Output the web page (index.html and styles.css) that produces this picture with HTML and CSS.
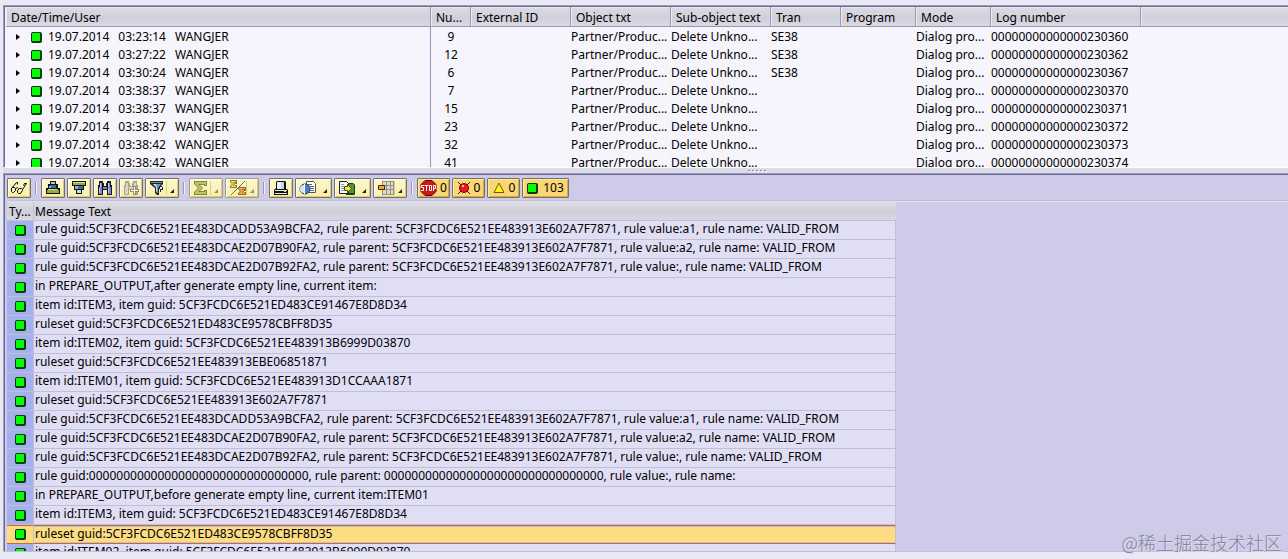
FILE: index.html
```html
<!DOCTYPE html>
<html lang="en">
<head>
  <meta charset="UTF-8">
  <title>Display logs</title>
  <link rel="stylesheet" href="styles.css">
</head>
<body>

  <svg class="defs" aria-hidden="true">
    <symbol id="glasses" viewBox="0 0 18 16">
      <g fill="none" stroke="#000"><path d="M2.500 7.500h2l1 1v2l-2 2h-1l-1-1v-3zM9.500 8.500h2l1 1v1l-2 3h-2l-1-1v-2zM5.500 8.500l2-1 1 1M1.500 8.500l5-6h1v2M12.500 9.500l4-6h-2l-1 2"/></g>
    </symbol>
    <symbol id="asc" viewBox="0 0 16 16">
      <path d="M5 1h6v3h2v4h2v6H1V8h2V4h2z" fill="#111"/>
      <path d="M6 2h4v2H6z" fill="#b4c9c4"/>
      <path d="M5 5h6v3H4V6h1z" fill="#2d6fa8"/>
      <path d="M4 6h2v2H4z" fill="#84b9dc"/>
      <path d="M3 9h10v1h1v3H2v-3h1z" fill="#8fac45"/>
      <path d="M3 9h9v1H3z" fill="#d3e08d"/>
    </symbol>
    <symbol id="desc" viewBox="0 0 16 16">
      <path d="M1 1h14v5h-2v4h-2v4H5v-4H3V6H1z" fill="#111"/>
      <path d="M2 2h12v3H2z" fill="#8fac45"/>
      <path d="M2 2h12v1H2z" fill="#d3e08d"/>
      <path d="M4 6h8v3H4z" fill="#2d6fa8"/>
      <path d="M4 6h3v3H4z" fill="#84b9dc"/>
      <path d="M6 10h4v3H6z" fill="#c9dcd8"/>
    </symbol>
    <symbol id="find" viewBox="0 0 16 16">
      <path d="M2 1h4v2h1v3h2V3h1V1h4v4h1v10h-5v-5H6v5H1V5h1z" fill="#16162c"/>
      <path d="M3 3h2v4H3zM2 7h3v7H2zM11 3h2v4h-2zM11 7h3v7h-3zM6 7h4v2H6z" fill="#7b84c4"/>
      <path d="M3 3h1v4H3zM2 8h1v5H2zM11 3h1v4h-1zM11 8h1v5h-1z" fill="#c3c9ee"/>
    </symbol>
    <symbol id="find-next" viewBox="0 0 16 16">
      <path d="M2 1h4v2h1v3h2V3h1V1h4v4h1v10h-5v-5H6v5H1V5h1z" fill="#aaa58c"/>
      <path d="M3 3h2v4H3zM2 7h3v7H2zM11 3h2v4h-2zM6 7h4v2H6z" fill="#dcd8c4"/>
      <path d="M10 6h3v3h3v3h-3v3h-3v-3H7V9h3z" fill="#8f8b78"/>
      <path d="M11 7h1v3h3v1h-3v3h-1v-3H8v-1h3z" fill="#fffbe0"/>
    </symbol>
    <symbol id="filter" viewBox="0 0 16 16">
      <path d="M1 1h13v3l-4 4v7H8l-2-2V8L1 4z" fill="#1c2434"/>
      <path d="M2 2h11v1H2zM4 4h8L9 8v5H8l-1-1V7z" fill="#7395b8"/>
      <path d="M4 4h3l1 3v5l-1-1V7z" fill="#c4d9ec"/>
      <path d="M10 6h3v1h1v3h-2v2h-1V9H9V8h1z" fill="#222"/>
      <path d="M11 7h2v2h-2z" fill="#eef"/>
    </symbol>
    <symbol id="sum" viewBox="0 0 16 16">
      <path d="M1 1h13v5h-3V5H7l3 3-3 3h4v-1h3v5H1v-3l4-4-4-4z" fill="#858a3c"/>
      <path d="M2 2h11v3h-1V4H5l4 4-4 4h7v-1h1v3H2v-2l4-4-4-4z" fill="#bcc468"/>
    </symbol>
    <symbol id="subtotal" viewBox="0 0 18 16">
      <path d="M2 15L16 1" stroke="#77745c" fill="none"/>
      <path d="M1 0h7v4H6V3H5l1 1-1 2h1V5h2v3H1V6l2-2-2-2z" fill="#817b3c"/>
      <path d="M2 1h5v1H4l1 2-1 2h3v1H2V6l2-2-2-2z" fill="#f9e040"/>
      <path d="M9 7h8v4h-2v-1h-1l1 1-1 2h1v-1h2v3H9v-2l2-2-2-2z" fill="#9a6a30"/>
      <path d="M10 8h6v1h-3l1 2-1 2h3v1h-6v-1l2-2-2-2z" fill="#f4a43c"/>
    </symbol>
    <symbol id="print" viewBox="0 0 16 16">
      <path d="M4 1h8l1 1v7h1l1 1v5H1v-5l2-2V2z" fill="#111"/>
      <path d="M4 2h7v7H4z" fill="#e8f3fc"/>
      <path d="M8 2h3v7H8z" fill="#b9d6eb"/>
      <path d="M2 10h12v1H2zM2 13h12v1H2z" fill="#f2f2ec"/>
      <path d="M11 11h2v1h-2z" fill="#e9cf45"/>
    </symbol>
    <symbol id="views" viewBox="0 0 18 16">
      <path d="M7.500 1.500h7l2 2v9h-9z" fill="#fff" stroke="#55554a"/>
      <path d="M9 4.500h4M11 6.500h4M11 8.500h4M11 10.500h4" stroke="#62666f" fill="none"/>
      <circle cx="6" cy="9" r="5" fill="#4a7ec4" stroke="#1f3e7c"/>
      <path d="M5 5a4 4 0 0 0 0 8z" fill="#cfe6fa"/>
      <path d="M5.500 4v10" stroke="#fff"/>
    </symbol>
    <symbol id="export" viewBox="0 0 18 16">
      <path d="M8 3h7l2 2v9l-1 1H8z" fill="#173d12"/>
      <path d="M9 4h6l1 1v8H9z" fill="#4c9638"/>
      <path d="M1.500 1.500h7l2 2v10h-9z" fill="#f4f8ff" stroke="#222"/>
      <path d="M3 4.500h3M3 6.500h3M3 8.500h3M3 10.500h3" stroke="#88a2c4"/>
      <path d="M6.500 6.500h3v-2l4 4-4 4v-2h-3z" fill="#f7e33c" stroke="#4b4b14"/>
    </symbol>
    <symbol id="layout" viewBox="0 0 18 16">
      <path d="M5 1h12v14H5z" fill="#8f8f86"/>
      <path d="M6 2h3v3H6zM10 2h3v3h-3zM14 2h2v3h-2zM6 6h3v3H6zM10 6h3v3h-3zM14 6h2v3h-2zM6 10h3v4H6zM10 10h3v4h-3zM14 10h2v4h-2z" fill="#dedcc8"/>
      <path d="M1.500 5.500h6v4h-6z" fill="#ffa51e" stroke="#3c2a08"/>
    </symbol>
    <symbol id="stop" viewBox="0 0 17 16">
      <path d="M5 .5h7l4 4v7l-4 4H5l-4-4v-7z" fill="#d0141c" stroke="#5c0a0c"/>
      <g fill="none" stroke="#fff"><path d="M4 5.500H1.500v2h2v3H1M4.500 5.500h4M6.500 5.500V11M9.500 5.500h2v5h-2zM13.500 11V5.500h2v3h-2"/></g>
    </symbol>
    <symbol id="error" viewBox="0 0 14 14">
      <path d="M1 1l12 12M13 1L1 13" stroke="#222" fill="none"/>
      <circle cx="7" cy="7" r="4.500" fill="#f0141c" stroke="#6e0a0c"/>
      <path d="M5 4h2v2H5z" fill="#ffb9b0"/>
    </symbol>
    <symbol id="warning" viewBox="0 0 14 14">
      <path d="M7 2l5 9.500H2z" fill="#fff01e" stroke="#6a5a10"/>
    </symbol>
  </svg>

  <section class="pane logs">
    <table>
      <colgroup>
        <col class="c-date"><col class="c-num"><col class="c-std"><col class="c-std"><col class="c-std">
        <col class="c-tran"><col class="c-mid"><col class="c-mid"><col class="c-log"><col>
      </colgroup>
      <thead>
        <tr>
          <th>Date/Time/User</th><th>Nu...</th><th>External ID</th><th>Object txt</th><th>Sub-object text</th>
          <th>Tran</th><th>Program</th><th>Mode</th><th>Log number</th><th></th>
        </tr>
      </thead>
      <tbody>
        <tr><td><div class="entry"><i class="arrow"></i><i class="ok"></i><span>19.07.2014</span><span>03:23:14</span><span>WANGJER</span></div></td><td>9</td><td></td><td>Partner/Produc...</td><td>Delete Unkno...</td><td>SE38</td><td></td><td>Dialog pro...</td><td>00000000000000230360</td><td></td></tr>
        <tr><td><div class="entry"><i class="arrow"></i><i class="ok"></i><span>19.07.2014</span><span>03:27:22</span><span>WANGJER</span></div></td><td>12</td><td></td><td>Partner/Produc...</td><td>Delete Unkno...</td><td>SE38</td><td></td><td>Dialog pro...</td><td>00000000000000230362</td><td></td></tr>
        <tr><td><div class="entry"><i class="arrow"></i><i class="ok"></i><span>19.07.2014</span><span>03:30:24</span><span>WANGJER</span></div></td><td>6</td><td></td><td>Partner/Produc...</td><td>Delete Unkno...</td><td>SE38</td><td></td><td>Dialog pro...</td><td>00000000000000230367</td><td></td></tr>
        <tr><td><div class="entry"><i class="arrow"></i><i class="ok"></i><span>19.07.2014</span><span>03:38:37</span><span>WANGJER</span></div></td><td>7</td><td></td><td>Partner/Produc...</td><td>Delete Unkno...</td><td></td><td></td><td>Dialog pro...</td><td>00000000000000230370</td><td></td></tr>
        <tr><td><div class="entry"><i class="arrow"></i><i class="ok"></i><span>19.07.2014</span><span>03:38:37</span><span>WANGJER</span></div></td><td>15</td><td></td><td>Partner/Produc...</td><td>Delete Unkno...</td><td></td><td></td><td>Dialog pro...</td><td>00000000000000230371</td><td></td></tr>
        <tr><td><div class="entry"><i class="arrow"></i><i class="ok"></i><span>19.07.2014</span><span>03:38:37</span><span>WANGJER</span></div></td><td>23</td><td></td><td>Partner/Produc...</td><td>Delete Unkno...</td><td></td><td></td><td>Dialog pro...</td><td>00000000000000230372</td><td></td></tr>
        <tr><td><div class="entry"><i class="arrow"></i><i class="ok"></i><span>19.07.2014</span><span>03:38:42</span><span>WANGJER</span></div></td><td>32</td><td></td><td>Partner/Produc...</td><td>Delete Unkno...</td><td></td><td></td><td>Dialog pro...</td><td>00000000000000230373</td><td></td></tr>
        <tr><td><div class="entry"><i class="arrow"></i><i class="ok"></i><span>19.07.2014</span><span>03:38:42</span><span>WANGJER</span></div></td><td>41</td><td></td><td>Partner/Produc...</td><td>Delete Unkno...</td><td></td><td></td><td>Dialog pro...</td><td>00000000000000230374</td><td></td></tr>
      </tbody>
    </table>
  </section>

  <div class="splitter"><i></i><i></i><i></i><i></i><i></i></div>

  <section class="pane messages">
    <div class="toolbar">
      <button aria-label="Details"><svg class="icon wide"><use href="#glasses"/></svg></button>
      <span class="sep"></span>
      <button aria-label="Sort ascending"><svg class="icon"><use href="#asc"/></svg></button>
      <button aria-label="Sort descending"><svg class="icon"><use href="#desc"/></svg></button>
      <button aria-label="Find"><svg class="icon"><use href="#find"/></svg></button>
      <button aria-label="Find next"><svg class="icon"><use href="#find-next"/></svg></button>
      <button class="menu split" aria-label="Filter"><svg class="icon"><use href="#filter"/></svg></button>
      <span class="sep"></span>
      <button class="menu split dim" aria-label="Total"><svg class="icon"><use href="#sum"/></svg></button>
      <button class="menu split dim" aria-label="Subtotal"><svg class="icon wide"><use href="#subtotal"/></svg></button>
      <span class="sep"></span>
      <button aria-label="Print"><svg class="icon"><use href="#print"/></svg></button>
      <button class="menu big" aria-label="Views"><svg class="icon wide"><use href="#views"/></svg></button>
      <button class="menu big" aria-label="Export"><svg class="icon wide"><use href="#export"/></svg></button>
      <button class="menu split" aria-label="Layout"><svg class="icon wide"><use href="#layout"/></svg></button>
      <span class="sep"></span>
      <button class="count"><svg class="icon wide"><use href="#stop"/></svg>0</button>
      <button class="count"><svg class="icon"><use href="#error"/></svg>0</button>
      <button class="count"><svg class="icon"><use href="#warning"/></svg>0</button>
      <button class="count last"><i class="ok"></i>103</button>
    </div>

    <div class="list">
      <table>
        <thead>
          <tr><th>Ty...</th><th>Message Text</th></tr>
        </thead>
        <tbody>
          <tr><td><i class="ok"></i></td><td>rule guid:5CF3FCDC6E521EE483DCADD53A9BCFA2, rule parent: 5CF3FCDC6E521EE483913E602A7F7871, rule value:a1, rule name: VALID_FROM</td></tr>
          <tr><td><i class="ok"></i></td><td>rule guid:5CF3FCDC6E521EE483DCAE2D07B90FA2, rule parent: 5CF3FCDC6E521EE483913E602A7F7871, rule value:a2, rule name: VALID_FROM</td></tr>
          <tr><td><i class="ok"></i></td><td>rule guid:5CF3FCDC6E521EE483DCAE2D07B92FA2, rule parent: 5CF3FCDC6E521EE483913E602A7F7871, rule value:, rule name: VALID_FROM</td></tr>
          <tr><td><i class="ok"></i></td><td>in PREPARE_OUTPUT,after generate empty line, current item:</td></tr>
          <tr><td><i class="ok"></i></td><td>item id:ITEM3, item guid: 5CF3FCDC6E521ED483CE91467E8D8D34</td></tr>
          <tr><td><i class="ok"></i></td><td>ruleset guid:5CF3FCDC6E521ED483CE9578CBFF8D35</td></tr>
          <tr><td><i class="ok"></i></td><td>item id:ITEM02, item guid: 5CF3FCDC6E521EE483913B6999D03870</td></tr>
          <tr><td><i class="ok"></i></td><td>ruleset guid:5CF3FCDC6E521EE483913EBE06851871</td></tr>
          <tr><td><i class="ok"></i></td><td>item id:ITEM01, item guid: 5CF3FCDC6E521EE483913D1CCAAA1871</td></tr>
          <tr><td><i class="ok"></i></td><td>ruleset guid:5CF3FCDC6E521EE483913E602A7F7871</td></tr>
          <tr><td><i class="ok"></i></td><td>rule guid:5CF3FCDC6E521EE483DCADD53A9BCFA2, rule parent: 5CF3FCDC6E521EE483913E602A7F7871, rule value:a1, rule name: VALID_FROM</td></tr>
          <tr><td><i class="ok"></i></td><td>rule guid:5CF3FCDC6E521EE483DCAE2D07B90FA2, rule parent: 5CF3FCDC6E521EE483913E602A7F7871, rule value:a2, rule name: VALID_FROM</td></tr>
          <tr><td><i class="ok"></i></td><td>rule guid:5CF3FCDC6E521EE483DCAE2D07B92FA2, rule parent: 5CF3FCDC6E521EE483913E602A7F7871, rule value:, rule name: VALID_FROM</td></tr>
          <tr><td><i class="ok"></i></td><td>rule guid:00000000000000000000000000000000, rule parent: 00000000000000000000000000000000, rule value:, rule name:</td></tr>
          <tr><td><i class="ok"></i></td><td>in PREPARE_OUTPUT,before generate empty line, current item:ITEM01</td></tr>
          <tr><td><i class="ok"></i></td><td>item id:ITEM3, item guid: 5CF3FCDC6E521ED483CE91467E8D8D34</td></tr>
          <tr class="selected"><td><i class="ok"></i></td><td>ruleset guid:5CF3FCDC6E521ED483CE9578CBFF8D35</td></tr>
          <tr><td><i class="ok"></i></td><td>item id:ITEM02, item guid: 5CF3FCDC6E521EE483913B6999D03870</td></tr>
        </tbody>
      </table>
    </div>
  </section>

  <div class="watermark">@稀土掘金技术社区</div>

</body>
</html>
```
FILE: styles.css
```css
* {
  box-sizing: border-box;
}

body {
  display: flex;
  flex-direction: column;
  height: 100vh;
  margin: 0;
  padding: 5px 0 7px 3px;
  overflow: hidden;
  background: #e9e9f5;
  color: #000;
  font: 12px/16px "Noto Sans", "Noto Sans CJK SC", sans-serif;
}

.defs {
  display: none;
}

.pane {
  overflow: hidden;
  border-top: 1px solid #a09ebf;
  border-left: 1px solid #a09ebf;
  box-shadow: inset 1px 1px #6b6896;
}

table {
  border-spacing: 0;
  table-layout: fixed;
  white-space: nowrap;
}

th, td {
  padding: 0;
  text-align: left;
  font-weight: normal;
}

th {
  background: linear-gradient(#dcdce4, #cfcedb 60%, #dad9e2);
}

/* green status light */
.ok {
  display: block;
  flex: none;
  width: 11px;
  height: 11px;
  border: 1px solid #0a3c0a;
  border-right-width: 2px;
  border-bottom-width: 2px;
  border-radius: 2px;
  background: #00ff00;
}

/* upper list */
.logs {
  flex: none;
  height: 163px;
  padding: 1px 0 0 2px;
  border-bottom: 1px solid #fff;
  background: #f6f5fe;
}

.logs table {
  width: 100%;
}

.c-date { width: 425px; }
.c-num { width: 40px; }
.c-std { width: 100px; }
.c-tran { width: 70px; }
.c-mid { width: 75px; }
.c-log { width: 150px; }

.logs th {
  height: 20px;
  padding: 2px 0 0 5px;
  border-right: 1px solid #9997b8;
  border-bottom: 1px solid #9997b8;
  box-shadow: inset 1px 1px #ececf2;
}

.logs th:last-child {
  border-right: none;
}

.logs td {
  height: 18px;
  padding-top: 2px;
}

.logs td:first-child {
  border-right: 1px solid #9997b8;
}

.logs td:nth-child(2) {
  text-align: center;
}

.entry {
  display: flex;
  align-items: center;
  gap: 9px;
  padding-left: 10px;
}

.entry .ok {
  margin-right: -3px;
}

.arrow {
  width: 6px;
  height: 6px;
  background: #000;
  clip-path: polygon(0 0, 4px 3px, 0 6px);
}

/* drag handle between the lists */
.splitter {
  display: flex;
  flex: none;
  justify-content: center;
  gap: 2px;
  height: 5px;
  padding: 2px 0 0 223px;
  background: #dddcea;
}

.splitter i {
  width: 2px;
  height: 1px;
  background: #8785a8;
  box-shadow: 1px 1px #fff;
}

/* lower list */
.messages {
  display: flex;
  flex: 1;
  flex-direction: column;
  min-height: 0;
  padding: 1px 0 0 3px;
  border-bottom: 1px solid #c0bfd4;
  background: #cecbe9;
}

.toolbar {
  display: flex;
  flex: none;
  align-items: center;
  gap: 2px;
  height: 26px;
  border-bottom: 1px solid #c0bfd4;
}

.sep {
  width: 2px;
  height: 12px;
  margin: 0 2px;
  border-left: 1px solid #9997b8;
  background: #f0effa;
}

button {
  position: relative;
  display: flex;
  align-items: center;
  justify-content: center;
  width: 24px;
  height: 20px;
  padding: 0;
  border: 1px solid #77725c;
  border-radius: 1px;
  background: linear-gradient(#fdf8cf, #fbeea6);
  box-shadow: inset 1px 1px #fffdf0, inset -1px -1px #d9c988;
  color: #000;
  font: inherit;
}

.icon {
  flex: none;
  width: 16px;
  height: 16px;
}

.icon.wide {
  width: 18px;
}

.menu {
  justify-content: flex-start;
  width: 34px;
  padding-left: 3px;
}

.menu.big {
  width: 37px;
}

.menu::after {
  content: "";
  position: absolute;
  right: 4px;
  bottom: 4px;
  border: 2px solid;
  border-color: transparent #222 #222 transparent;
}

.split::before {
  content: "";
  position: absolute;
  right: 11px;
  top: 2px;
  bottom: 2px;
  width: 1px;
  background: #c8d890;
}

.dim {
  border-color: #a39e84;
}

.dim::after {
  border-color: transparent #908c78 #908c78 transparent;
}

.count {
  gap: 3px;
  width: 33px;
  padding-top: 1px;
  background: #fbd673;
  box-shadow: inset 1px 1px #fde9a8, inset -1px -1px #cfa950;
}

.count .icon {
  width: 14px;
}

.count .icon.wide {
  width: 17px;
}

.count.last {
  gap: 5px;
  width: 47px;
}

.list {
  flex: 1;
  min-height: 0;
  overflow: hidden;
  border-top: 1px solid #dfdeeb;
}

.list table {
  width: 889px;
}

.list th {
  height: 19px;
  padding: 2px 0 0 1px;
  border-bottom: 1px solid #c0bfd4;
}

.list th:first-child {
  width: 27px;
  padding-left: 2px;
  border-right: 1px solid #c0bfd4;
}

.list td {
  height: 19px;
  padding: 0 0 2px 1px;
  border-right: 1px solid #c0bfd4;
  border-bottom: 1px solid #c0bfd4;
  background: #e0def5;
}

.list td:first-child {
  padding: 0 0 0 8px;
  background: #a6aff0;
}

.list .selected td {
  padding-bottom: 1px;
  border-top: 1px solid #c96a2c;
  border-bottom-color: #c96a2c;
  background: #fddc82;
}

.list .selected td:last-child {
  box-shadow: inset 0 1px #c0bfd4, inset 0 -1px #c0bfd4;
}

.watermark {
  position: absolute;
  right: 6px;
  bottom: 5px;
  color: #85829c;
  font: 300 18px/24px "Noto Sans CJK SC", sans-serif;
  text-shadow: 1px 1px #dddaf0;
}
```
